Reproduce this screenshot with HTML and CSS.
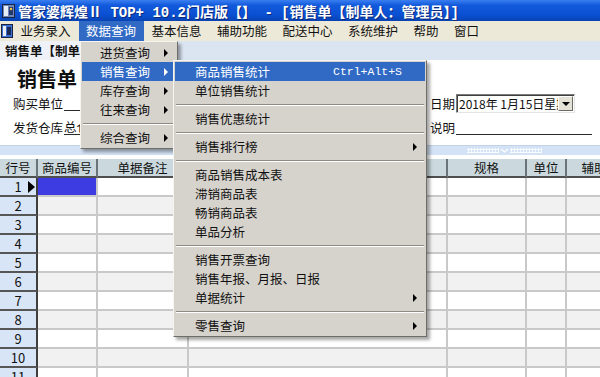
FILE: index.html
```html
<!DOCTYPE html>
<html lang="zh-CN">
<head>
    <meta charset="UTF-8">
    <meta name="viewport" content="width=device-width, initial-scale=1.0">
    <title>管家婆辉煌Ⅱ TOP+ 10.2门店版</title>

    <link rel="stylesheet" href="styles.css">

</head>
<body>

    <!-- window title -->
    <div class="title-bar">
        <svg class="app-icon" viewBox="0 0 13 14" width="13" height="14">
            <rect x="0.5" y="0.5" width="12" height="13" fill="#6f86b8" stroke="#1b2440"/>
            <rect x="2" y="2" width="4" height="10" fill="#e8eef8"/>
            <rect x="7" y="3" width="4" height="8" fill="#23366e"/>
            <circle cx="9" cy="5" r="1.3" fill="#f0c040"/>
        </svg>
        <span class="title-text">管家婆辉煌Ⅱ TOP+ 10.2门店版【】 - [销售单【制单人：管理员】]</span>
    </div>

    <!-- main menu -->
    <div class="menu-bar">
        <svg class="menu-icon" viewBox="0 0 12 14" width="12" height="14">
            <rect x="0.5" y="0.5" width="11" height="13" fill="#3c6fd0" stroke="#1b2440"/>
            <rect x="2" y="2" width="3" height="10" fill="#e8eef8"/>
            <rect x="6" y="3" width="4" height="8" fill="#1a2a58"/>
        </svg>
        <span class="menu-item">业务录入</span>
        <span class="menu-item active">数据查询</span>
        <span class="menu-item">基本信息</span>
        <span class="menu-item">辅助功能</span>
        <span class="menu-item">配送中心</span>
        <span class="menu-item">系统维护</span>
        <span class="menu-item">帮助</span>
        <span class="menu-item">窗口</span>
    </div>

    <div class="child-bar">
        <span class="child-tab">销售单【制单人：管理员】</span>
    </div>

    <!-- bill header -->
    <div class="form">
        <h1 class="form-title">销售单</h1>

        <div class="form-row">
            <div class="field-left">
                <span class="label">购买单位</span>
                <span class="line"></span>
            </div>
            <div class="field-right">
                <span class="label">日期</span>
                <div class="combo">
                    <span class="combo-text">2018年 1月15日星期一</span>
                    <span class="combo-btn"><span class="combo-arrow"></span></span>
                </div>
            </div>
        </div>

        <div class="form-row">
            <div class="field-left">
                <span class="label">发货仓库</span>
                <span class="line">总仓库</span>
            </div>
            <div class="field-right">
                <span class="label">说明</span>
                <span class="line line-grow"></span>
            </div>
        </div>
    </div>

    <div class="splitter">
        <span class="grip"></span>
        <svg class="grip-mark" viewBox="0 0 9 5" width="9" height="5">
            <path d="M1 1l3.5 3L8 1" fill="none" stroke="#ffffff" stroke-width="1.2"/>
        </svg>
        <span class="grip"></span>
    </div>

    <!-- detail grid -->
    <div class="grid">
        <div class="grid-row grid-head">
            <span>行号</span>
            <span>商品编号</span>
            <span>单据备注</span>
            <span>商品名称</span>
            <span>规格</span>
            <span>单位</span>
            <span>辅助单位</span>
        </div>

        <div class="grid-row">
            <span class="cell-num">1<span class="row-pointer"></span></span>
            <span class="cell cell-selected"></span>
            <span class="cell"></span><span class="cell"></span><span class="cell"></span><span class="cell"></span><span class="cell"></span>
        </div>
        <div class="grid-row even">
            <span class="cell-num">2</span>
            <span class="cell"></span><span class="cell"></span><span class="cell"></span><span class="cell"></span><span class="cell"></span><span class="cell"></span>
        </div>
        <div class="grid-row">
            <span class="cell-num">3</span>
            <span class="cell"></span><span class="cell"></span><span class="cell"></span><span class="cell"></span><span class="cell"></span><span class="cell"></span>
        </div>
        <div class="grid-row even">
            <span class="cell-num">4</span>
            <span class="cell"></span><span class="cell"></span><span class="cell"></span><span class="cell"></span><span class="cell"></span><span class="cell"></span>
        </div>
        <div class="grid-row">
            <span class="cell-num">5</span>
            <span class="cell"></span><span class="cell"></span><span class="cell"></span><span class="cell"></span><span class="cell"></span><span class="cell"></span>
        </div>
        <div class="grid-row even">
            <span class="cell-num">6</span>
            <span class="cell"></span><span class="cell"></span><span class="cell"></span><span class="cell"></span><span class="cell"></span><span class="cell"></span>
        </div>
        <div class="grid-row">
            <span class="cell-num">7</span>
            <span class="cell"></span><span class="cell"></span><span class="cell"></span><span class="cell"></span><span class="cell"></span><span class="cell"></span>
        </div>
        <div class="grid-row even">
            <span class="cell-num">8</span>
            <span class="cell"></span><span class="cell"></span><span class="cell"></span><span class="cell"></span><span class="cell"></span><span class="cell"></span>
        </div>
        <div class="grid-row">
            <span class="cell-num">9</span>
            <span class="cell"></span><span class="cell"></span><span class="cell"></span><span class="cell"></span><span class="cell"></span><span class="cell"></span>
        </div>
        <div class="grid-row even">
            <span class="cell-num">10</span>
            <span class="cell"></span><span class="cell"></span><span class="cell"></span><span class="cell"></span><span class="cell"></span><span class="cell"></span>
        </div>
        <div class="grid-row">
            <span class="cell-num">11</span>
            <span class="cell"></span><span class="cell"></span><span class="cell"></span><span class="cell"></span><span class="cell"></span><span class="cell"></span>
        </div>
    </div>

    <!-- open drop-down: 数据查询 -->
    <div class="menu menu-main">
        <div class="menu-entry">进货查询<span class="arrow"></span></div>
        <div class="menu-entry hot">销售查询<span class="arrow"></span></div>
        <div class="menu-entry">库存查询<span class="arrow"></span></div>
        <div class="menu-entry">往来查询<span class="arrow"></span></div>
        <div class="menu-sep"></div>
        <div class="menu-entry">综合查询<span class="arrow"></span></div>
    </div>

    <!-- open sub menu: 销售查询 -->
    <div class="menu menu-sub">
        <div class="menu-entry hot">商品销售统计<span class="shortcut">Ctrl+Alt+S</span></div>
        <div class="menu-entry">单位销售统计</div>
        <div class="menu-sep"></div>
        <div class="menu-entry">销售优惠统计</div>
        <div class="menu-sep"></div>
        <div class="menu-entry">销售排行榜<span class="arrow"></span></div>
        <div class="menu-sep"></div>
        <div class="menu-entry">商品销售成本表</div>
        <div class="menu-entry">滞销商品表</div>
        <div class="menu-entry">畅销商品表</div>
        <div class="menu-entry">单品分析</div>
        <div class="menu-sep"></div>
        <div class="menu-entry">销售开票查询</div>
        <div class="menu-entry">销售年报、月报、日报</div>
        <div class="menu-entry">单据统计<span class="arrow"></span></div>
        <div class="menu-sep"></div>
        <div class="menu-entry">零售查询<span class="arrow"></span></div>
    </div>

</body>
</html>
```

FILE: styles.css
```css
* {
    box-sizing: border-box;
}

body {
    margin: 0;
    width: 600px;
    height: 377px;
    overflow: hidden;
    position: relative;
    background-color: #ffffff;
    color: #111111;
    font-family: "Noto Sans CJK SC", sans-serif;
    font-size: 12.5px;
}

/* title bar */
.title-bar {
    height: 21px;
    display: flex;
    align-items: center;
    padding-left: 2px;
    background: linear-gradient(#3a7ff0, #1259dc 25%, #0a50d2 70%, #0743b4);
    color: #ffffff;
}

.app-icon {
    flex: none;
    margin-right: 3px;
}

.title-text {
    font-family: "Liberation Mono", "Noto Sans CJK SC", monospace;
    font-size: 14px;
    font-weight: bold;
    white-space: nowrap;
    text-shadow: 1px 1px 0 #0b2a7a;
}

/* menu bar */
.menu-bar {
    height: 20px;
    display: flex;
    align-items: center;
    padding-left: 1px;
    background-color: #ece9d8;
}

.menu-icon {
    flex: none;
}

.menu-item {
    height: 20px;
    line-height: 20px;
    padding: 0 8px 0 7.5px;
    white-space: nowrap;
}

.menu-item.active {
    background-color: #316ac5;
    color: #ffffff;
}

/* child window caption */
.child-bar {
    height: 19px;
    display: flex;
    background-color: #dbe5f2;
}

.child-tab {
    padding: 0 5px;
    line-height: 19px;
    font-weight: bold;
    background-color: #eef2f8;
    white-space: nowrap;
}

/* bill header form */
.form {
    height: 85px;
    padding: 6px 8px 0 13px;
}

.form-title {
    margin: 0 0 2px 4px;
    font-size: 20px;
    line-height: 26px;
    font-weight: bold;
}

.form-row {
    display: flex;
    height: 19px;
    margin-bottom: 5px;
}

.field-left {
    width: 417px;
    display: flex;
    align-items: center;
}

.field-right {
    flex: 1;
    display: flex;
    align-items: center;
}

.label {
    white-space: nowrap;
}

.line {
    align-self: flex-start;
    width: 110px;
    height: 17px;
    line-height: 17px;
    margin-left: 1px;
    border-bottom: 1px solid #2a2a2a;
}

.line-grow {
    flex: 1;
    width: auto;
}

.combo {
    width: 119px;
    height: 19px;
    margin-left: 1px;
    display: flex;
    overflow: hidden;
    background-color: #ffffff;
    border: 1px solid;
    border-color: #7a7a7a #e4e4e4 #e4e4e4 #7a7a7a;
    box-shadow: inset 1px 1px 0 #404040;
}

.combo-text {
    flex: 1;
    overflow: hidden;
    white-space: nowrap;
    padding-left: 2px;
    font-size: 12px;
    line-height: 17px;
}

.combo-btn {
    flex: none;
    width: 15px;
    margin: 1px 1px 1px 0;
    display: flex;
    align-items: center;
    justify-content: center;
    background-color: #e4e1d6;
    border: 1px solid;
    border-color: #ffffff #6d6b66 #6d6b66 #ffffff;
}

.combo-arrow {
    border-top: 4px solid #000000;
    border-left: 4px solid transparent;
    border-right: 4px solid transparent;
}

/* splitter between form and grid */
.splitter {
    height: 10px;
    margin-bottom: 4px;
    padding-left: 467px;
    display: flex;
    align-items: center;
    background-color: #d3e2f4;
    border-top: 1px solid #c3d2e6;
}

.grip {
    width: 32px;
    height: 5px;
    background-image: radial-gradient(circle, #ffffff 45%, transparent 55%);
    background-size: 3px 3px;
}

.grip-mark {
    margin: 0 1px;
}

/* detail grid */
.grid {
    width: 648px;
}

.grid-row {
    display: grid;
    grid-template-columns: 38px 60px 91px 259px 79px 40px 81px;
    height: 19px;
}

.grid-head {
    background-color: #cbd9de;
}

.grid-head span {
    text-align: center;
    line-height: 17px;
    white-space: nowrap;
    border-right: 2px solid #6a7478;
    border-bottom: 2px solid #4e4e4e;
}

.cell {
    border-right: 2px solid #c9c9c9;
    border-bottom: 2px solid #c9c9c9;
}

.even .cell {
    background-color: #f1f1f1;
}

.cell-selected {
    background-color: #3c3ce2;
}

.cell-num {
    position: relative;
    text-align: center;
    font-size: 13px;
    line-height: 17px;
    background-color: #d8e5f6;
    border-right: 2px solid #3e3e3e;
    border-bottom: 2px solid #565656;
}

.row-pointer {
    position: absolute;
    right: 1px;
    top: 3px;
    border-left: 7px solid #000000;
    border-top: 6px solid transparent;
    border-bottom: 6px solid transparent;
}

/* drop-down menus */
.menu {
    position: absolute;
    padding: 1px;
    background-color: #d6d3cc;
    border: 1px solid;
    border-color: #f6f5f2 #6f6d68 #6f6d68 #f6f5f2;
    box-shadow: 3px 3px 3px rgba(0, 0, 0, 0.35);
}

.menu-main {
    left: 80px;
    top: 41px;
    width: 98px;
}

.menu-sub {
    left: 173px;
    top: 60px;
    width: 254px;
}

.menu-entry {
    height: 19px;
    display: flex;
    align-items: center;
    padding-left: 18px;
    white-space: nowrap;
}

.menu-sub .menu-entry {
    padding-left: 20px;
}

.menu-entry.hot {
    background-color: #316ac5;
    color: #ffffff;
}

.arrow {
    margin-left: auto;
    margin-right: 8px;
    border-left: 4px solid #000000;
    border-top: 4px solid transparent;
    border-bottom: 4px solid transparent;
}

.hot .arrow {
    border-left-color: #ffffff;
}

.shortcut {
    margin-left: auto;
    margin-right: 23px;
    font-family: "Liberation Mono", monospace;
    font-size: 11.5px;
}

.menu-sep {
    height: 9px;
    display: flex;
    align-items: center;
    padding: 0 1px;
}

.menu-sep::before {
    content: "";
    flex: 1;
    border-top: 1px solid #8d8a83;
    border-bottom: 1px solid #ffffff;
}
```
